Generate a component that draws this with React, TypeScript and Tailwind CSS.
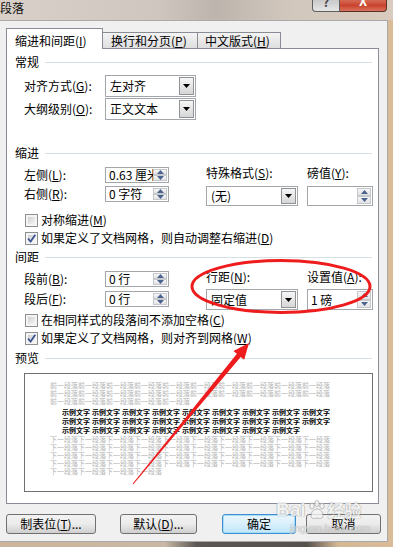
import React from "react";

function K({ k }: { k: string }) {
  return (
    <span>
      (<span className="underline underline-offset-[1px]">{k}</span>)
    </span>
  );
}

function Heading({ text }: { text: string }) {
  return (
    <div className="flex items-center h-[14px] pl-[8px] pr-[6px]">
      <span>{text}</span>
      <div className="flex-1 h-px bg-[#d5dfe5] ml-[6px]" />
    </div>
  );
}

function DropBtn() {
  return (
    <div className="w-[15px] h-full border border-[#8f9297] bg-gradient-to-b from-[#f6f6f6] to-[#d6d6d6] flex items-center justify-center">
      <svg width="7" height="4" viewBox="0 0 7 4">
        <path d="M0 0h7L3.5 4z" fill="#000" />
      </svg>
    </div>
  );
}

function Select({ value, className }: { value: string; className: string }) {
  return (
    <div className={"flex border border-[#a3a6ab] bg-white p-px " + className}>
      <div className="flex-1 flex items-center pl-[3px] overflow-hidden whitespace-nowrap">{value}</div>
      <DropBtn />
    </div>
  );
}

function Arrow({ up }: { up: boolean }) {
  return (
    <div className="flex-1 flex items-center justify-center border border-[#c5c8cc] bg-gradient-to-b from-[#f7f7f7] to-[#e2e2e2]">
      <svg width="7" height="4" viewBox="0 0 7 4">
        {up ? <path d="M0 4h7L3.5 0z" fill="#4c6390" /> : <path d="M0 0h7L3.5 4z" fill="#4c6390" />}
      </svg>
    </div>
  );
}

function Spin({ value, className }: { value: string; className: string }) {
  return (
    <div className={"flex border border-[#a3a6ab] bg-white p-px " + className}>
      <div className="flex-1 flex items-center pl-[2px] overflow-hidden whitespace-nowrap">{value}</div>
      <div className="w-[14px] h-full flex flex-col">
        <Arrow up />
        <Arrow up={false} />
      </div>
    </div>
  );
}

function Checkbox({ checked }: { checked?: boolean }) {
  return (
    <div className="w-[13px] h-[13px] border border-[#8e8f8f] bg-[#f4f4f4] p-[2px]">
      <div className="w-full h-full bg-gradient-to-br from-[#cfcfcf] to-[#f6f6f6] flex items-center justify-center">
        {checked && (
          <svg width="9" height="9" viewBox="0 0 9 9" className="overflow-visible">
            <path d="M1 4.5 L3.6 7.5 L8.3 0.8" fill="none" stroke="#3b5494" strokeWidth="1.8" />
          </svg>
        )}
      </div>
    </div>
  );
}

function CheckRow({ checked, children, mt }: { checked?: boolean; children: React.ReactNode; mt: string }) {
  return (
    <div className={"flex items-center h-[14px] pl-[18px] " + mt}>
      <Checkbox checked={checked} />
      <span className="ml-[3px] whitespace-nowrap">{children}</span>
    </div>
  );
}

function Btn({ children, className, primary }: { children: React.ReactNode; className: string; primary?: boolean }) {
  return (
    <div
      className={
        "h-[20px] rounded-[3px] border flex items-center justify-center whitespace-nowrap " +
        (primary
          ? "border-[#3c8fd0] bg-gradient-to-b from-[#eaf6fd] via-[#d9f0fc] to-[#bee6fd] shadow-[inset_0_0_0_1px_#a8dcf7] "
          : "border-[#707070] bg-gradient-to-b from-[#f2f2f2] via-[#ebebeb] to-[#cfcfcf] ") +
        className
      }
    >
      {children}
    </div>
  );
}

const PREV = "前一段落".repeat(10);
const NEXT = "下一段落".repeat(10);

function SampleLine({ n }: { n: number }) {
  return (
    <div className="flex gap-[2px] h-[9px] leading-[9px] font-bold text-black">
      {Array.from({ length: n }).map((_, i) => (
        <span key={i}>示例文字</span>
      ))}
    </div>
  );
}

export default function App() {
  return (
    <div className="relative w-[393px] h-[547px] overflow-hidden font-['Noto_Sans_CJK_SC','Liberation_Sans',sans-serif] text-[12px] leading-[14px] text-black bg-[#d9bb98]">
      {/* title bar */}
      <div className="h-[20px] flex items-start bg-[linear-gradient(to_right,#d8d0c9_0%,#cfc7bf_40%,#bdb5ad_55%,#d2c8be_75%,#d9cbbd_100%)]">
        <span className="mt-[1px] text-[12px] leading-[14px] text-[#111]">段落</span>
        <div className="flex-1" />
        <div className="flex mr-[6px]">
          <div className="w-[28px] h-[12px] border border-t-0 border-[#5f5f5f] rounded-bl-[4px] bg-gradient-to-b from-[#c9c9c9] to-[#e6e6e6] overflow-hidden flex justify-center">
            <span className="text-[12px] leading-[12px] -mt-[4px] font-bold text-[#3b3b3b]">?</span>
          </div>
          <div className="w-[47px] h-[12px] border border-t-0 border-l-0 border-[#5a3028] rounded-br-[4px] bg-gradient-to-b from-[#d66a55] via-[#c9422d] to-[#d9735c] overflow-hidden flex justify-center">
            <span className="text-[13px] leading-[12px] -mt-[5px] font-bold text-white">X</span>
          </div>
        </div>
      </div>

      <div className="flex">
        {/* client area */}
        <div className="w-[388px] h-[522px] bg-[#f0f0f0] border-t border-r border-b border-[#a9a9a9] pt-[7px]">
          {/* tabs */}
          <div className="flex items-end h-[20px] ml-[6px]">
            <div className="relative z-10 h-[21px] w-[97px] mb-[-1px] bg-white border-l border-t border-r border-[#898c95] pl-[8px] pt-[5px] whitespace-nowrap">
              缩进和间距<K k="I" />
            </div>
            <div className="h-[16px] w-[95px] border-t border-r border-[#898c95] bg-gradient-to-b from-[#f4f4f4] to-[#dedede] flex items-center pl-[8px] whitespace-nowrap">
              换行和分页<K k="P" />
            </div>
            <div className="h-[16px] w-[83px] border-t border-r border-[#898c95] bg-gradient-to-b from-[#f4f4f4] to-[#dedede] flex items-center pl-[7px] whitespace-nowrap">
              中文版式<K k="H" />
            </div>
          </div>

          {/* panel */}
          <div className="ml-[6px] w-[373px] h-[456px] border border-[#898c95] bg-white">
            <div className="mt-[6px]">
              <Heading text="常规" />
            </div>
            <div className="flex items-center h-[22px] mt-[6px] pl-[17px]">
              <span className="w-[81px] whitespace-nowrap">
                对齐方式<K k="G" />:
              </span>
              <Select value="左对齐" className="w-[91px] h-[22px]" />
            </div>
            <div className="flex items-center h-[22px] mt-[1px] pl-[17px]">
              <span className="w-[81px] whitespace-nowrap">
                大纲级别<K k="O" />:
              </span>
              <Select value="正文文本" className="w-[91px] h-[22px]" />
            </div>

            <div className="mt-[26px]">
              <Heading text="缩进" />
            </div>
            <div className="flex h-[40px] mt-[6px] pl-[17px]">
              <div className="w-[182px]">
                <div className="flex items-center h-[16px] mt-[1px]">
                  <span className="w-[81px] whitespace-nowrap">
                    左侧<K k="L" />:
                  </span>
                  <Spin value="0.63 厘米" className="w-[64px] h-[16px]" />
                </div>
                <div className="flex items-center h-[16px] mt-[3px]">
                  <span className="w-[81px] whitespace-nowrap">
                    右侧<K k="R" />:
                  </span>
                  <Spin value="0 字符" className="w-[64px] h-[16px]" />
                </div>
              </div>
              <div className="w-[101px]">
                <div className="h-[14px] whitespace-nowrap">
                  特殊格式<K k="S" />:
                </div>
                <Select value="(无)" className="w-[92px] h-[20px] mt-[6px]" />
              </div>
              <div className="w-[66px]">
                <div className="h-[14px] whitespace-nowrap">
                  磅值<K k="Y" />:
                </div>
                <Spin value="" className="w-[66px] h-[20px] mt-[6px]" />
              </div>
            </div>

            <CheckRow mt="mt-[7px]">
              对称缩进<K k="M" />
            </CheckRow>
            <CheckRow mt="mt-[4px]" checked>
              如果定义了文档网格，则自动调整右缩进<K k="D" />
            </CheckRow>

            <div className="mt-[5px]">
              <Heading text="间距" />
            </div>
            <div className="flex h-[40px] mt-[6px] pl-[17px]">
              <div className="w-[182px]">
                <div className="flex items-center h-[16px] mt-[1px]">
                  <span className="w-[81px] whitespace-nowrap">
                    段前<K k="B" />:
                  </span>
                  <Spin value="0 行" className="w-[64px] h-[16px]" />
                </div>
                <div className="flex items-center h-[16px] mt-[4px]">
                  <span className="w-[81px] whitespace-nowrap">
                    段后<K k="F" />:
                  </span>
                  <Spin value="0 行" className="w-[64px] h-[16px]" />
                </div>
              </div>
              <div className="w-[101px]">
                <div className="h-[14px] whitespace-nowrap">
                  行距<K k="N" />:
                </div>
                <Select value="固定值" className="w-[92px] h-[21px] mt-[5px]" />
              </div>
              <div className="w-[66px]">
                <div className="h-[14px] whitespace-nowrap">
                  设置值<K k="A" />:
                </div>
                <Spin value="1 磅" className="w-[66px] h-[21px] mt-[5px]" />
              </div>
            </div>

            <CheckRow mt="mt-[3px]">
              在相同样式的段落间不添加空格<K k="C" />
            </CheckRow>
            <CheckRow mt="mt-[4px]" checked>
              如果定义了文档网格，则对齐到网格<K k="W" />
            </CheckRow>

            <div className="mt-[6px]">
              <Heading text="预览" />
            </div>
            <div className="ml-[17px] mt-[8px] w-[349px] h-[119px] border border-[#707070] bg-white pt-[7px] pl-[25px] text-[7px] leading-[8px] overflow-hidden">
              <div className="text-[#b4b4b4] whitespace-nowrap">
                <div className="h-[8px]">{PREV}</div>
                <div className="h-[8px]">{PREV}</div>
                <div className="h-[8px]">{"前一段落".repeat(5)}</div>
              </div>
              <div className="ml-[12px] mt-[3px] whitespace-nowrap">
                <SampleLine n={9} />
                <SampleLine n={9} />
                <SampleLine n={8} />
              </div>
              <div className="text-[#b4b4b4] whitespace-nowrap">
                <div className="h-[8px]">{NEXT}</div>
                <div className="h-[8px]">{NEXT}</div>
                <div className="h-[8px]">{NEXT}</div>
                <div className="h-[8px]">{NEXT}</div>
                <div className="h-[8px]">{"下一段落".repeat(4)}</div>
              </div>
            </div>
          </div>

          {/* buttons */}
          <div className="flex mt-[10px]">
            <Btn className="ml-[6px] w-[90px]">
              制表位<K k="T" />...
            </Btn>
            <Btn className="ml-[24px] w-[77px]">
              默认<K k="D" />...
            </Btn>
            <Btn className="ml-[25px] w-[74px]" primary>
              确定
            </Btn>
            <Btn className="ml-[10px] w-[75px]">取消</Btn>
          </div>
        </div>
      </div>
      {/* bottom glass strip */}
      <div className="h-[5px] bg-[linear-gradient(to_right,#cdb59c_0%,#c9b7a5_42%,#5b5753_50%,#55514d_78%,#d4b894_86%,#d9bb98_100%)]" />

      {/* watermark */}
      <div className="absolute left-[276px] top-[498px] pointer-events-none opacity-80">
        <div className="flex items-end h-[22px] text-[#f4f4f4] [text-shadow:0_0_1px_#8a8a8a,0_0_1px_#8a8a8a] font-['Liberation_Sans',sans-serif]">
          <span className="text-[19px] leading-[20px] font-bold">Bai</span>
          <svg width="20" height="20" viewBox="0 0 20 20" className="mx-[1px]">
            <g fill="#f4f4f4" stroke="#9a9a9a" strokeWidth="0.8">
              <ellipse cx="5" cy="6" rx="2.2" ry="3" />
              <ellipse cx="10" cy="3.5" rx="2.2" ry="3" />
              <ellipse cx="15" cy="6" rx="2.2" ry="3" />
              <path d="M4 16 C4 11 8 9 10 9 C12 9 16 11 16 16 C16 18.5 13 19 10 18 C7 19 4 18.5 4 16z" />
            </g>
          </svg>
          <span className="text-[17px] leading-[20px] font-bold font-['Noto_Sans_CJK_SC',sans-serif]">经验</span>
        </div>
        <div className="ml-[14px] mt-[3px] text-[10px] leading-[12px] text-[#d8d8d8] [text-shadow:0_0_1px_#a0a0a0] font-['Liberation_Sans',sans-serif]">
          jingyan.baidu.com
        </div>
      </div>

      {/* red annotations */}
      <svg className="absolute left-0 top-0 pointer-events-none" width="393" height="547" viewBox="0 0 393 547">
        <ellipse cx="281" cy="286.5" rx="89" ry="26" fill="none" stroke="#ee1c1c" strokeWidth="3" />
        <polygon
          points="132.6,483.7 236.9,353.8 233.4,351 249,343 244.2,359.8 240.7,357 133.4,484.3"
          fill="#ee1c1c"
        />
      </svg>
    </div>
  );
}
